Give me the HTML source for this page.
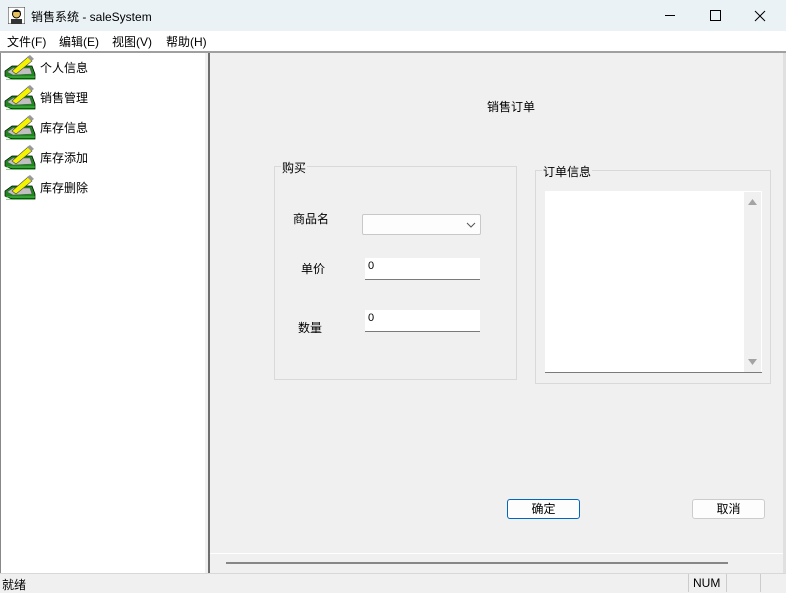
<!DOCTYPE html>
<html><head><meta charset="utf-8"><style>
*{margin:0;padding:0;box-sizing:border-box}
body{width:786px;height:593px;overflow:hidden;background:#f0f0f0;font-family:"Liberation Sans","Noto Sans CJK SC",sans-serif;font-size:12px;color:#000;position:relative}
.a{position:absolute;white-space:nowrap}
.it{position:absolute;left:4px;height:30px;width:190px;white-space:nowrap}
.it span{position:absolute;left:36px;top:5px;font-size:12px;white-space:nowrap}
.inp{position:absolute;background:#fff;border-bottom:1px solid #7a7a7a;font-size:11px;padding:2px 3px}
.btn{position:absolute;height:20px;border:1px solid #ccc;border-radius:3px;background:#fdfdfd;text-align:center;line-height:18px}
</style></head><body>
<div class="a" style="left:0;top:0;width:786px;height:31px;background:#eaf2f6"></div>
<svg class="a" style="left:8px;top:7px" width="17" height="17"><rect x="0" y="0" width="17" height="17" fill="#fff" stroke="#333"/><circle cx="8.5" cy="7" r="4" fill="#e8c060" stroke="#000"/><path d="M4 5 Q8.5 0 13 5" fill="#000"/><rect x="3" y="12" width="11" height="5" fill="#333"/></svg>
<div class="a" style="left:31px;top:8px;font-size:12px">销售系统 - saleSystem</div>
<svg class="a" style="left:655px;top:8px" width="120" height="16" stroke="#000" fill="none" stroke-width="1"><path d="M10 7.5h10"/><rect x="55.5" y="2.5" width="10" height="10"/><path d="M100 3l10 10M110 3l-10 10"/></svg>
<div class="a" style="left:0;top:31px;width:786px;height:20px;background:#fff"></div>
<div class="a" style="left:7px;top:33px">文件(F)</div>
<div class="a" style="left:59px;top:33px">编辑(E)</div>
<div class="a" style="left:112px;top:33px">视图(V)</div>
<div class="a" style="left:166px;top:33px">帮助(H)</div>
<div class="a" style="left:0;top:51px;width:786px;height:2px;background:#a0a0a0"></div>
<div class="a" style="left:0;top:53px;width:205px;height:520px;background:#fff;border-left:1px solid #888"></div>
<div class="a" style="left:205px;top:53px;width:3px;height:520px;background:#f0f0f0"></div>
<div class="a" style="left:208px;top:53px;width:2px;height:520px;background:#6e6e6e"></div>
<div class="a" style="left:783px;top:53px;width:3px;height:520px;background:#e0e0e0"></div>
<div id="tree"></div>
<script>
var n=["个人信息","销售管理","库存信息","库存添加","库存删除"],h="";
for(var i=0;i<5;i++){h+='<div class="it" style="top:'+(54+i*30)+'px"><svg width="32" height="28"><path d="M1 17 L8 12 L28 12 L31 20 L31 25 L8 25 L1 22Z" fill="#1a8a1a" stroke="#000" stroke-width="0.7"/><path d="M3 18 L9 14 L26 14 L28 20 L9 21Z" fill="#c0c0c0" stroke="#555" stroke-width="0.6"/><path d="M8 17 L24 3 L28 7 L12 20Z" fill="#f4f400" stroke="#444" stroke-width="0.6"/><path d="M23 3 L26 1 L30 5 L27 7Z" fill="#999"/><path d="M2 23h29M2 25.5h29" stroke="#6c6" stroke-width="0.8"/></svg><span>'+n[i]+'</span></div>'}
document.getElementById("tree").innerHTML=h;
</script>
<div class="a" style="left:487px;top:98px">销售订单</div>
<div class="a" style="left:274px;top:166px;width:243px;height:214px;border:1px solid #d9d9d9"></div>
<div class="a" style="left:281px;top:159px;background:#f0f0f0;padding:0 1px">购买</div>
<div class="a" style="left:535px;top:170px;width:236px;height:214px;border:1px solid #d9d9d9"></div>
<div class="a" style="left:542px;top:163px;background:#f0f0f0;padding:0 1px">订单信息</div>
<div class="a" style="left:293px;top:210px">商品名</div>
<div class="a" style="left:301px;top:260px">单价</div>
<div class="a" style="left:298px;top:319px">数量</div>
<div class="a" style="left:362px;top:214px;width:119px;height:21px;background:#fdfdfd;border:1px solid #c8c8c8;border-radius:2px"></div>
<svg class="a" style="left:466px;top:221px" width="10" height="8"><path d="M1 2l4 4 4-4" stroke="#555" fill="none"/></svg>
<div class="inp" style="left:365px;top:258px;width:115px;height:22px">0</div>
<div class="inp" style="left:365px;top:310px;width:115px;height:22px">0</div>
<div class="a" style="left:545px;top:191px;width:217px;height:182px;background:#fff;border-bottom:1px solid #7a7a7a"></div>
<div class="a" style="left:744px;top:192px;width:17px;height:180px;background:#f0f0f0"></div>
<svg class="a" style="left:747px;top:197px" width="11" height="170" fill="#a3a3a3"><path d="M1 8h9L5.5 2z"/><path d="M1 162h9l-4.5 6z"/></svg>
<div class="btn" style="left:507px;top:499px;width:73px;border-color:#0067c0">确定</div>
<div class="btn" style="left:692px;top:499px;width:73px">取消</div>
<div class="a" style="left:210px;top:553px;width:573px;height:1px;background:#fff"></div>
<div class="a" style="left:226px;top:562px;width:502px;height:2px;background:#878787"></div>
<div class="a" style="left:0;top:573px;width:786px;height:1px;background:#d8d8d8"></div>
<div class="a" style="left:2px;top:576px">就绪</div>
<div class="a" style="left:688px;top:574px;width:1px;height:18px;background:#ccc"></div>
<div class="a" style="left:693px;top:576px">NUM</div>
<div class="a" style="left:726px;top:574px;width:1px;height:18px;background:#ccc"></div>
<div class="a" style="left:760px;top:574px;width:1px;height:18px;background:#ccc"></div>
</body></html>
